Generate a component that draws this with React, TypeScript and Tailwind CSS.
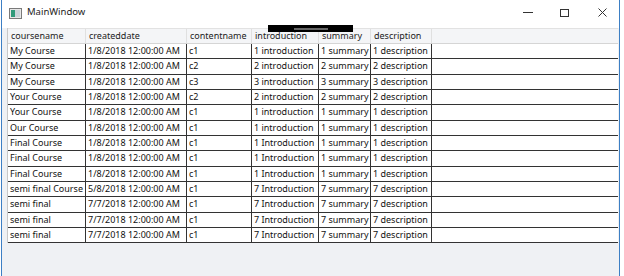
const columns = [
  { key: "coursename", width: "w-[78px]" },
  { key: "createddate", width: "w-[101px]" },
  { key: "contentname", width: "w-[65px]" },
  { key: "introduction", width: "w-[67px]" },
  { key: "summary", width: "w-[52px]" },
  { key: "description", width: "w-[61px]" },
];

const rows = [
  ["My Course", "1/8/2018 12:00:00 AM", "c1", "1 introduction", "1 summary", "1 description"],
  ["My Course", "1/8/2018 12:00:00 AM", "c2", "2 introduction", "2 summary", "2 description"],
  ["My Course", "1/8/2018 12:00:00 AM", "c3", "3 introduction", "3 summary", "3 description"],
  ["Your Course", "1/8/2018 12:00:00 AM", "c2", "2 introduction", "2 summary", "2 description"],
  ["Your Course", "1/8/2018 12:00:00 AM", "c1", "1 introduction", "1 summary", "1 description"],
  ["Our Course", "1/8/2018 12:00:00 AM", "c1", "1 introduction", "1 summary", "1 description"],
  ["Final Course", "1/8/2018 12:00:00 AM", "c1", "1 Introduction", "1 summary", "1 description"],
  ["Final Course", "1/8/2018 12:00:00 AM", "c1", "1 Introduction", "1 summary", "1 description"],
  ["Final Course", "1/8/2018 12:00:00 AM", "c1", "1 Introduction", "1 summary", "1 description"],
  ["semi final Course", "5/8/2018 12:00:00 AM", "c1", "7 Introduction", "7 summary", "7 description"],
  ["semi final", "7/7/2018 12:00:00 AM", "c1", "7 Introduction", "7 summary", "7 description"],
  ["semi final", "7/7/2018 12:00:00 AM", "c1", "7 Introduction", "7 summary", "7 description"],
  ["semi final", "7/7/2018 12:00:00 AM", "c1", "7 Introduction", "7 summary", "7 description"],
];

function WindowIcon() {
  return (
    <svg width="13" height="11" viewBox="0 0 13 11">
      <rect x="0.5" y="0.5" width="12" height="10" fill="#e8e8e8" stroke="#7a7a7a" />
      <rect x="2" y="2" width="4" height="7" fill="#2f9a7a" />
      <rect x="6" y="2" width="5" height="7" fill="#c9d3d8" />
    </svg>
  );
}

export default function App() {
  return (
    <div
      className="w-[624px] h-[276px] bg-white flex overflow-hidden relative text-[#111]"
      style={{ fontFamily: '"Noto Sans", "Open Sans", sans-serif' }}
    >
      <div className="ml-[1px] w-[619px] h-full border-x border-[#3d7fc4] flex flex-col">
        {/* title bar */}
        <div className="h-[28px] flex items-center bg-white shrink-0">
          <div className="ml-[7px] mt-[-2px]">
            <WindowIcon />
          </div>
          <span className="ml-[5px] mt-[-3px] text-[9.5px] text-[#222]">MainWindow</span>
          <div className="ml-auto flex items-center mt-[-3px] mr-[12px]">
            <div className="w-[10px] h-[1px] bg-[#333]" />
            <div className="ml-[27px] w-[9px] h-[8px] border border-[#333]" />
            <svg className="ml-[29px]" width="9" height="9" viewBox="0 0 9 9">
              <path d="M0.5 0.5 L8.5 8.5 M8.5 0.5 L0.5 8.5" stroke="#333" strokeWidth="1" />
            </svg>
          </div>
        </div>

        {/* content */}
        <div className="flex-1 bg-[#eff1f4] pl-[5px] pr-[1px]">
          <div className="bg-white border-l border-[#c8c8c8]">
            <div className="h-[16px] flex bg-[#f4f5f7] border-t border-[#e2e2e2] border-b border-b-[#d5d5d5] text-[9px]">
              {columns.map((c) => (
                <div
                  key={c.key}
                  className={`${c.width} shrink-0 border-r border-[#e0e0e0] pl-[3px] leading-[14px] text-[#222]`}
                >
                  {c.key}
                </div>
              ))}
              <div className="flex-1" />
            </div>
            {rows.map((r, i) => (
              <div key={i} className="h-[15.33px] flex border-b border-[#333] text-[9px]">
                {r.map((cell, j) => (
                  <div
                    key={j}
                    className={`${columns[j].width} shrink-0 border-r border-[#333] pl-[2px] leading-[14px] whitespace-nowrap overflow-hidden`}
                  >
                    {cell}
                  </div>
                ))}
                <div className="flex-1" />
              </div>
            ))}
          </div>
        </div>
      </div>

      {/* redaction bar over the header */}
      <div className="absolute left-[268px] top-[25px] w-[85px] h-[7px] bg-black flex items-center justify-center">
        <div className="w-[34px] h-[2px] bg-[#666]" />
      </div>
    </div>
  );
}
